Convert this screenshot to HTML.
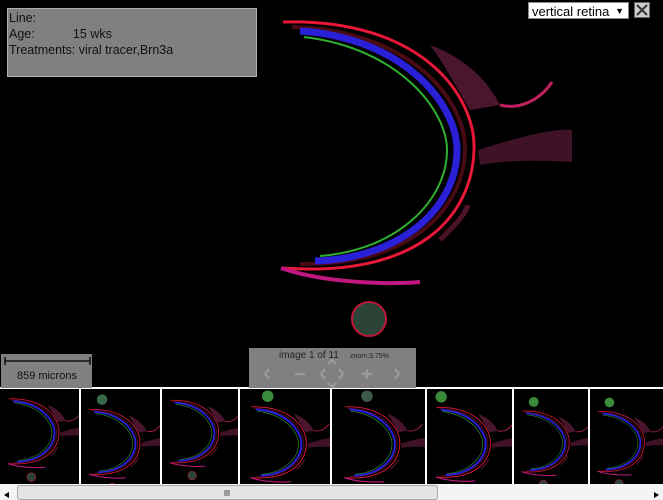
<!DOCTYPE html>
<html><head><meta charset="utf-8"><style>
html,body{margin:0;padding:0;background:#000;width:663px;height:500px;overflow:hidden;font-family:"Liberation Sans",sans-serif}
.abs{position:absolute}
#info{left:7px;top:8px;width:248px;height:66px;background:#808080;border:1px solid #b0b0b0;font-size:12.5px;color:#111;line-height:16px;padding-top:1px}
#info div{padding-left:1px;white-space:pre}
#sel{left:528px;top:2px;width:101px;height:17px;background:#fff;border:1px solid #888;font-size:13px;color:#000;line-height:17px;padding-left:3px;box-sizing:border-box}
#sel span{position:absolute;right:4px;top:0;font-size:9px}
#x{left:634px;top:2px;width:16px;height:16px;background:#ccc;border:1px solid #666;box-sizing:border-box}
#scale{left:1px;top:354px;width:91px;height:34px;background:#808080}
#nav{left:249px;top:348px;width:167px;height:40px;background:#808080}
</style></head><body>
<svg class="abs" style="left:0;top:0" width="663" height="500">
<defs>
<g id="eye">
<path d="M430,45 C470,60 490,85 500,105 L470,110 C455,85 445,65 430,45Z" fill="#6a2040" opacity="0.7"/>
<path d="M500,105 C520,110 540,100 552,82" stroke="#c02060" stroke-width="3" fill="none"/>
<path d="M478,150 C510,140 550,128 572,130 L572,162 C540,160 505,160 480,165Z" fill="#5a1a38" opacity="0.7"/>
<path d="M440,240 C455,225 465,215 468,205" stroke="#802040" stroke-width="5" fill="none" opacity="0.6"/>
<path d="M283,22 C420,18 476,95 474,150 C472,215 420,278 282,268" stroke="#e81838" stroke-width="3" fill="none"/>
<path d="M292,27 C410,30 466,100 465,150 C464,205 415,266 300,264" stroke="#4a0a14" stroke-width="4" fill="none"/>
<path d="M300,31 C405,38 457,105 457,150 C457,205 405,258 315,261" stroke="#2a20d8" stroke-width="7" fill="none"/>
<path d="M304,37 C398,48 447,110 447,150 C447,200 398,250 320,256" stroke="#30b030" stroke-width="2" fill="none"/>
<path d="M281,268 C330,285 400,284 420,282" stroke="#c01880" stroke-width="4" fill="none"/>
<circle cx="369" cy="319" r="17" fill="#2c4438" stroke="#c01838" stroke-width="2"/>
</g>
</defs>
<rect width="663" height="388" fill="#000"/>
<use href="#eye"/>
<rect x="0" y="387" width="663" height="2" fill="#fff"/>
<g>
<svg x="0" y="389" width="79" height="95" viewBox="250 0 300 330" preserveAspectRatio="xMidYMid meet"><use href="#eye"/></svg>
<svg x="81" y="389" width="79" height="95" viewBox="250 -40 300 330" preserveAspectRatio="xMidYMid meet"><circle cx="330" cy="-15" r="20" fill="#3a6a4a"/><use href="#eye"/></svg>
<svg x="162" y="389" width="76" height="95" viewBox="250 0 300 330" preserveAspectRatio="xMidYMid meet"><use href="#eye"/></svg>
<svg x="240" y="389" width="90" height="95" viewBox="250 -40 300 330" preserveAspectRatio="xMidYMid meet"><circle cx="340" cy="-15" r="20" fill="#3a8a3a"/><use href="#eye"/></svg>
<svg x="332" y="389" width="93" height="95" viewBox="250 -40 300 330" preserveAspectRatio="xMidYMid meet"><circle cx="360" cy="-15" r="20" fill="#3a5a4a"/><use href="#eye"/></svg>
<svg x="427" y="389" width="85" height="95" viewBox="250 -40 300 330" preserveAspectRatio="xMidYMid meet"><circle cx="300" cy="-15" r="20" fill="#3a8a3a"/><use href="#eye"/></svg>
<svg x="514" y="389" width="74" height="95" viewBox="250 -40 300 330" preserveAspectRatio="xMidYMid meet"><circle cx="330" cy="-15" r="20" fill="#3a8a3a"/><use href="#eye"/></svg>
<svg x="590" y="389" width="73" height="95" viewBox="250 -40 300 330" preserveAspectRatio="xMidYMid meet"><circle cx="330" cy="-15" r="20" fill="#3a8a3a"/><use href="#eye"/></svg>
</g>
<rect x="79" y="389" width="2" height="95" fill="#fff"/>
<rect x="160" y="389" width="2" height="95" fill="#fff"/>
<rect x="238" y="389" width="2" height="95" fill="#fff"/>
<rect x="330" y="389" width="2" height="95" fill="#fff"/>
<rect x="425" y="389" width="2" height="95" fill="#fff"/>
<rect x="512" y="389" width="2" height="95" fill="#fff"/>
<rect x="588" y="389" width="2" height="95" fill="#fff"/>
<rect x="0" y="484" width="663" height="16" fill="#f4f4f4"/>
<polygon points="9,492 4,495 9,498" fill="#000"/>
<polygon points="654,492 659,495 654,498" fill="#000"/>
<rect x="17.5" y="485.5" width="420" height="14" rx="2" fill="#e4e4e4" stroke="#aaa"/>
<path d="M225,490v6M227,490v6M229,490v6" stroke="#555"/>
</svg>
<div id="info" class="abs"><div>Line:</div><div>Age:           15 wks</div><div>Treatments: viral tracer,Brn3a</div></div>
<div id="sel" class="abs">vertical retina<span>▼</span></div>
<div id="x" class="abs"><svg width="14" height="14"><path d="M2,2L12,12M12,2L2,12" stroke="#333" stroke-width="2"/></svg></div>
<div id="scale" class="abs"><svg width="91" height="34"><path d="M4,3v8M4,7H89M89,3v8" stroke="#111" stroke-width="1.5"/><text x="46" y="25" font-size="11" text-anchor="middle" fill="#111" font-family="Liberation Sans">859 microns</text></svg></div>
<div id="nav" class="abs"><svg width="167" height="40"><text x="30" y="10" font-size="10" fill="#222" font-family="Liberation Sans">image 1 of 11</text><text x="101" y="10" font-size="7" fill="#222" font-family="Liberation Sans">zoom:3.75%</text>
<g stroke="#999" stroke-width="2.5" fill="none"><path d="M20,21l-4,5l4,5"/><path d="M46,26h10"/><path d="M76,21l-4,5l4,5M90,21l4,5l-4,5M79,16l4,-4l4,4M79,35l4,4l4,-4"/><path d="M113,26h10M118,21v10"/><path d="M146,21l4,5l-4,5"/></g></svg></div>
</body></html>
